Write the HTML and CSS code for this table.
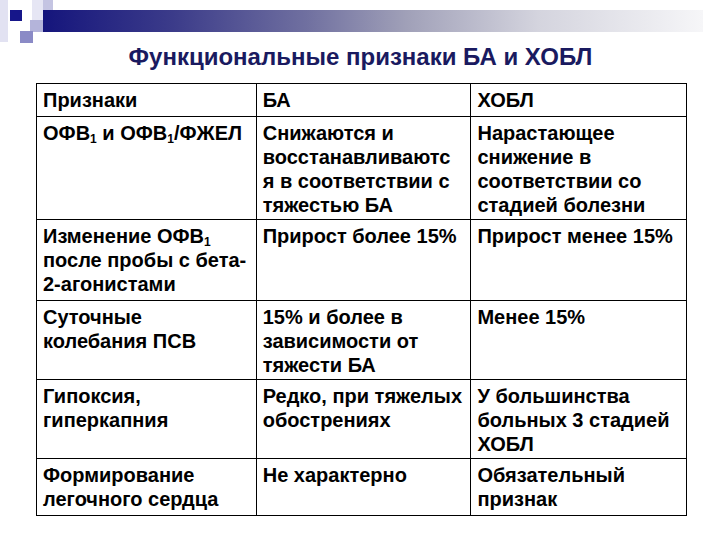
FILE: index.html
```html
<!DOCTYPE html>
<html lang="ru">
<head>
<meta charset="utf-8">
<title>Функциональные признаки БА и ХОБЛ</title>
<link rel="stylesheet" href="styles.css">
</head>
<body>
<div class="slide">
  <div class="deco">
    <span class="sq strip"></span>
    <span class="sq pale"></span>
    <span class="sq lilac"></span>
    <span class="sq haze"></span>
    <span class="sq dark"></span>
    <span class="sq mid"></span>
    <span class="bar"></span>
  </div>
  <h1 class="title">Функциональные признаки БА и ХОБЛ</h1>
  <table class="grid">
    <colgroup><col class="c1"><col class="c2"><col class="c3"></colgroup>
    <tr><td>Признаки</td><td>БА</td><td>ХОБЛ</td></tr>
    <tr class="r2"><td>ОФВ<sub>1</sub> и ОФВ<sub>1</sub>/ФЖЕЛ</td><td>Снижаются и<br>восстанавливаютс<br>я в соответствии с<br>тяжестью БА</td><td>Нарастающее<br>снижение в<br>соответствии со<br>стадией болезни</td></tr>
    <tr><td>Изменение ОФВ<sub>1</sub><br>после пробы с бета-<br>2-агонистами</td><td>Прирост более 15%</td><td>Прирост менее 15%</td></tr>
    <tr class="r4"><td>Суточные<br>колебания ПСВ</td><td>15% и более в<br>зависимости от<br>тяжести БА</td><td>Менее 15%</td></tr>
    <tr class="r4"><td>Гипоксия,<br>гиперкапния</td><td>Редко, при тяжелых<br>обострениях</td><td>У большинства<br>больных 3 стадией<br>ХОБЛ</td></tr>
    <tr><td>Формирование<br>легочного сердца</td><td>Не характерно</td><td>Обязательный<br>признак</td></tr>
  </table>
</div>
</body>
</html>
```
FILE: styles.css
```css
html, body {
  margin: 0;
  padding: 0;
  background: #ffffff;
}
.slide {
  position: relative;
  width: 720px;
  height: 540px;
  overflow: hidden;
  padding-top: 43px;
  box-sizing: border-box;
}
.deco {
  position: absolute;
  left: 0;
  top: 0;
  width: 720px;
  height: 44px;
}
.sq {
  position: absolute;
  display: block;
}
.strip { left: 0; top: 0; width: 8px; height: 42px; background: #e2e2f2; }
.pale { left: 32px; top: 0; width: 21px; height: 21px; background: #e6e6f4; }
.lilac { left: 43px; top: 0; width: 10px; height: 10px; background: #c4c4e2; }
.haze { left: 30px; top: 20px; width: 13px; height: 12px; background: #b4b4da; }
.dark { left: 10px; top: 10px; width: 12px; height: 11px; background: #16168a; }
.mid { left: 20px; top: 31px; width: 13px; height: 12px; background: #8a8ac6; }
.bar {
  position: absolute;
  left: 43px;
  top: 10px;
  width: 660px;
  height: 22px;
  background: linear-gradient(to right, #15157c 0%, #3c3c8a 20%, #7070a0 40%, #a0a0b8 55%, #d4d4de 75%, #f6f6f8 100%);
}
.title {
  margin: 0;
  height: 40px;
  font-family: "Liberation Sans", Arial, sans-serif;
  font-weight: bold;
  font-size: 24px;
  line-height: 28px;
  color: #1a1a60;
  text-align: center;
  padding-left: 1px;
}
.grid {
  margin-left: 36px;
  width: 651px;
  border-collapse: collapse;
  font-family: "Liberation Sans", Arial, sans-serif;
  font-weight: bold;
  font-size: 20px;
  line-height: 24px;
  color: #000;
}
.c1 { width: 220px; }
.c2 { width: 215px; }
.c3 { width: 216px; }
.grid td {
  border: 1px solid #000;
  vertical-align: top;
  padding: 4px 4px 4px 6px;
  white-space: nowrap;
}
.grid .r2 td { padding-bottom: 2px; }
.grid .r4 td { padding-bottom: 2px; }
.grid sub {
  font-size: 12px;
  line-height: 0;
  vertical-align: -3px;
}
```
